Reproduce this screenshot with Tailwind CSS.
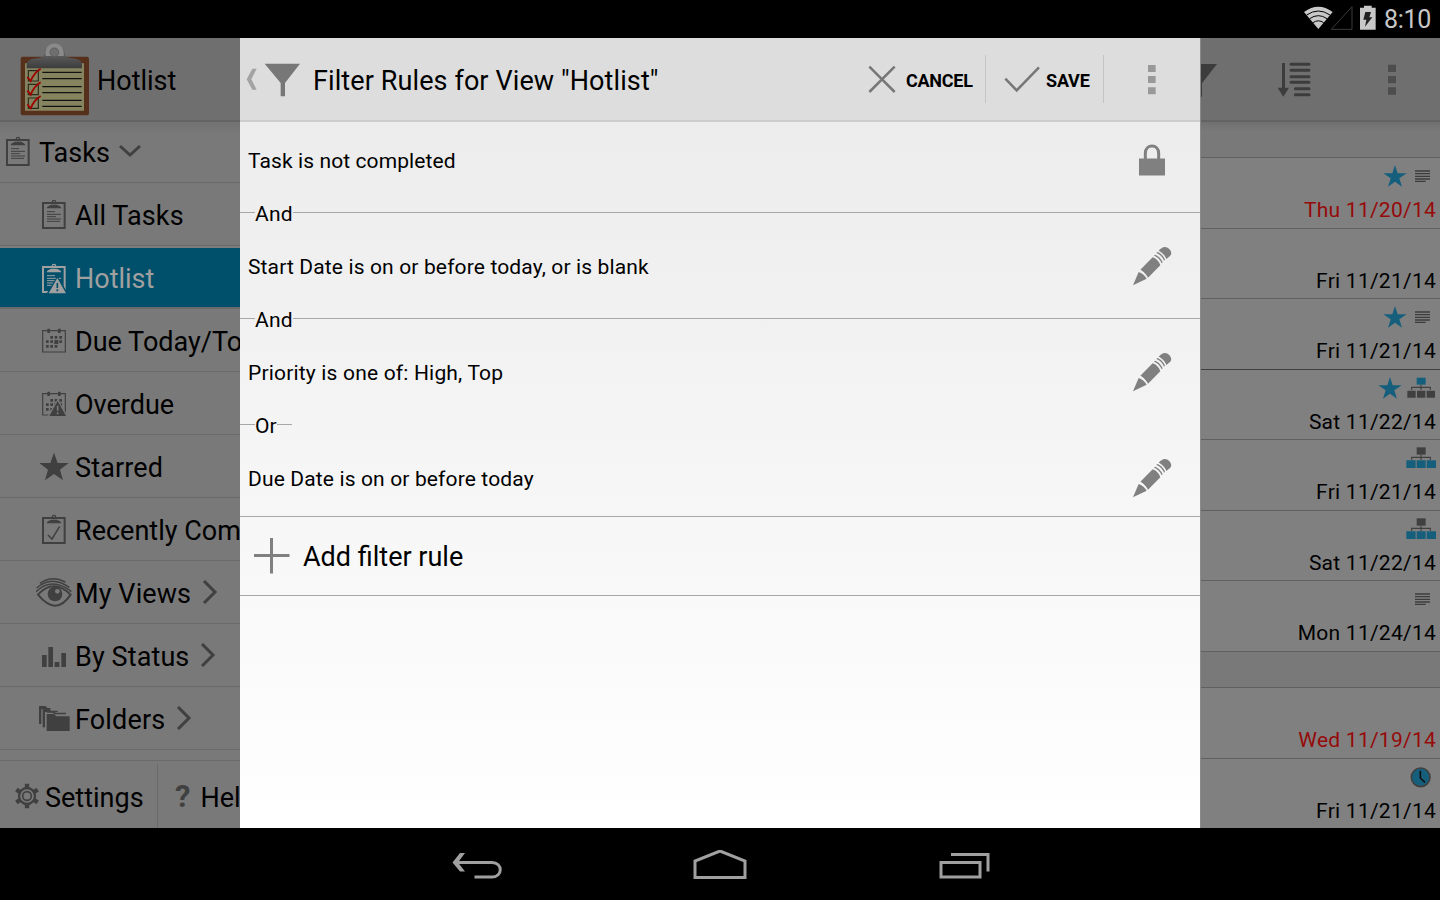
<!DOCTYPE html>
<html lang="en">

<head>
    <meta charset="UTF-8">
    <meta name="viewport" content="width=device-width, initial-scale=1.0">
    <title>Filter Rules</title>
    <script src="https://cdn.jsdelivr.net/npm/@tailwindcss/browser@4"></script>
</head>

<body class="w-[1440px] h-[900px] overflow-hidden bg-black font-['Roboto',sans-serif] text-black flex flex-col">

    <!-- Shared icons -->
    <svg class="hidden">
        <symbol id="clipboard" viewBox="0 0 108 108">
            <rect x="21" y="21" width="65" height="75" fill="none" stroke="currentColor" stroke-width="6" />
            <path d="M32 37c1-7 8-8 13-11h18c5 3 12 4 13 11z" fill="currentColor" />
            <circle cx="54" cy="18" r="5" fill="none" stroke="currentColor" stroke-width="4" />
        </symbol>
        <symbol id="note-lines" viewBox="0 0 108 108">
            <path d="M33 47h24M33 55h42M33 62h27M33 69h42M33 76h39" stroke="currentColor" stroke-width="3" />
        </symbol>
        <symbol id="calendar" viewBox="0 0 108 108">
            <path d="M20 26h68v64H20z" fill="none" stroke="currentColor" stroke-width="3.5" />
            <path d="M34 20h8v13h-8zM66 20h8v13h-8z" fill="currentColor" />
            <path d="M43 42h8v8h-8zM56 42h8v8h-8zM70 42h8v8h-8zM30 55h8v8h-8zM43 55h8v8h-8zM55 54h12v12H55zM70 55h8v8h-8zM30 69h8v8h-8zM43 69h8v8h-8zM56 69h8v8h-8z" fill="currentColor" />
        </symbol>
        <symbol id="star" viewBox="0 0 72 72">
            <path d="M36 3l8 25h27L49 43l8 25-21-15-21 15 8-25L1 28h27z" fill="currentColor" />
        </symbol>
        <symbol id="lines" viewBox="0 0 75 72">
            <path d="M12 21h45M12 29h45M12 37h45M12 45h45M12 52h32" stroke="#3c3c3c" stroke-width="4" />
        </symbol>
        <symbol id="tree-parent" viewBox="0 0 90 72">
            <path d="M45 26v16M17 42V34h56v8" fill="none" stroke="#404040" stroke-width="3.5" />
            <path d="M32 5h27v21H32z" fill="#165f7c" />
            <path d="M4 44h25v21H4zM33 44h25v21H33zM62 44h25v21H62z" fill="#404040" />
        </symbol>
        <symbol id="tree-child" viewBox="0 0 90 72">
            <path d="M45 26v16M17 42V34h56v8" fill="none" stroke="#404040" stroke-width="3.5" />
            <path d="M32 4h27v22H32z" fill="#404040" />
            <path d="M1 43h28v23H1zM32 43h27v23H32zM62 43h28v23H62z" fill="#165f7c" />
        </symbol>
        <symbol id="pencil" viewBox="84 36 144 144">
            <path d="M99 166l17-40c9 2 19 11 24 20z" fill="#808080" />
            <path d="M121 119l37-37c9 2 20 13 23 24l-37 37c-4-9-14-20-23-24z" fill="#808080" />
            <path d="M162 77l3-3c10 3 20 14 23 23l-3 3c-3-9-13-20-23-23zM169 69l3-3c10 3 20 14 23 23l-3 3c-3-9-13-20-23-23z" fill="#808080" />
            <path d="M176 62c7-8 16-15 27-9 11 7 14 19 7 25l-11 9c-3-10-13-21-23-25z" fill="#808080" />
        </symbol>
    </svg>

    <!-- Status bar -->
    <div class="h-[38px] flex justify-end items-start text-[#c8c8c8]">
        <svg class="w-20 h-[30px] mt-[3px]" viewBox="330 10 240 90">
            <path d="M385 88L342 37q43-31 86 0z" fill="#c8c8c8" />
            <path d="M350 46q35-24 70 0M359 57q26-18 52 0M369 69q16-11 32 0" fill="none" stroke="#000" stroke-width="3" />
            <path d="M424 89l62-68v68z" fill="none" stroke="#3a3a3a" stroke-width="3" />
            <path d="M510 24h12v-6h23v6h12v66h-47z" fill="#c8c8c8" />
            <path d="M526 37h17l-5 16h9l-22 28 4-21h-9z" fill="#222" />
        </svg>
        <span class="text-[25px] leading-[39px] w-[56px] ml-1 -tracking-[0.3px]">8:10</span>
    </div>

    <div class="h-[790px] flex">

        <!-- Sidebar -->
        <aside class="w-60 shrink-0 overflow-hidden bg-[#797979] flex flex-col whitespace-nowrap text-[27px]">
            <div class="h-[84px] shrink-0 bg-[#6f6f6f] border-b-2 border-[#636363] flex items-center pl-5">
                <svg class="w-[70px] h-[74px] shrink-0" viewBox="60 18 210 222">
                    <defs>
                        <linearGradient id="clip" x2="0" y2="1">
                            <stop offset="0" stop-color="#777" />
                            <stop offset="1" stop-color="#3c3c3c" />
                        </linearGradient>
                    </defs>
                    <rect x="62" y="62" width="205" height="176" rx="6" fill="#57301c" />
                    <path d="M75 82h177v142H75z" fill="#85845f" />
                    <path d="M80 97V84c2-12 16-16 30-17 20-2 24-8 24-19 0-34 60-34 60 0 0 11 4 17 24 19 14 1 26 5 28 17v13z" fill="url(#clip)" />
                    <path d="M137 60c-8-50 60-50 54 0z" fill="#8a8a8a" />
                    <circle cx="163" cy="49" r="13" fill="#6f6f6f" stroke="#5c5c5c" stroke-width="3" />
                    <path d="M127 109h118M127 128h118M127 152h118M127 170h118M127 193h118M127 211h118" stroke="#111" stroke-width="3.5" />
                    <path d="M85 104h30v31H85zM85 145h30v31H85zM85 186h30v31H85z" fill="none" stroke="#2a2a20" stroke-width="3.5" />
                    <path d="M82 123l10 12q10-25 30-37M82 164l10 12q10-25 30-37M82 205l10 12q10-25 30-37" fill="none" stroke="#a00000" stroke-width="5.5" />
                </svg>
                <span class="pl-[7px] pt-[4px]">Hotlist</span>
            </div>
            <div class="h-[61px] shrink-0 border-b border-[#6a6a6a] flex items-center text-[#404040] bg-linear-to-b from-[#727272] to-[#797979] to-20%">
                <svg class="w-9 h-9 mb-0.5 shrink-0"><use href="#clipboard" /><use href="#note-lines" /></svg>
                <span class="text-black pl-[3px] pt-[3px]">Tasks</span>
                <svg class="w-6 h-6 ml-[8px] mb-1" viewBox="0 0 24 24" fill="none" stroke="currentColor" stroke-width="3"><path d="M2 8l10 9 10-9" /></svg>
            </div>
            <div class="h-[63px] shrink-0 border-b border-[#6a6a6a] flex items-center pl-9 text-[#404040]">
                <svg class="w-9 h-9 shrink-0"><use href="#clipboard" /><use href="#note-lines" /></svg>
                <span class="text-black pl-[3px] pt-[4px] tracking-[0.1px]">All Tasks</span>
            </div>
            <div class="h-[63px] shrink-0 border-y-2 border-t-[#7d7d7d] border-b-[#6a6a6a] bg-[#004f6b] flex items-center pl-9 text-[#a0a0a0]">
                <svg class="w-9 h-9 shrink-0" viewBox="0 0 108 108">
                    <use href="#clipboard" width="108" height="108" /><use href="#note-lines" width="108" height="108" />
                    <path d="M64 48l33 54H31z" fill="#004f6b" />
                    <path d="M64 54l26 46H38z" fill="currentColor" />
                    <path d="M64 69v15M64 88v6" stroke="#004f6b" stroke-width="5" />
                </svg>
                <span class="pl-[3px] pt-[4px]">Hotlist</span>
            </div>
            <div class="h-[63px] shrink-0 border-b border-[#6a6a6a] flex items-center pl-9 text-[#404040]">
                <svg class="w-9 h-9 shrink-0"><use href="#calendar" /></svg>
                <span class="text-black pl-[3px] pt-[4px]">Due Today/Tomorrow</span>
            </div>
            <div class="h-[63px] shrink-0 border-b border-[#6a6a6a] flex items-center pl-9 text-[#404040]">
                <svg class="w-9 h-9 shrink-0" viewBox="0 0 108 108">
                    <use href="#calendar" width="108" height="108" />
                    <path d="M65 42l32 54H33z" fill="#797979" />
                    <path d="M65 48l25 45H40z" fill="currentColor" />
                    <path d="M65 62v15M65 82v6" stroke="#797979" stroke-width="5" />
                </svg>
                <span class="text-black pl-[3px] pt-[4px]">Overdue</span>
            </div>
            <div class="h-[63px] shrink-0 border-b border-[#6a6a6a] flex items-center pl-9 text-[#404040]">
                <svg class="w-9 h-9 shrink-0" viewBox="108 54 108 108"><path d="M162 68l11 31h33l-26 20 9 32-27-19-27 19 9-32-26-20h33z" fill="currentColor" /></svg>
                <span class="text-black pl-[3px] pt-[4px] tracking-[0.15px]">Starred</span>
            </div>
            <div class="h-[63px] shrink-0 border-b border-[#6a6a6a] flex items-center pl-9 text-[#404040]">
                <svg class="w-9 h-9 shrink-0" viewBox="0 0 108 108">
                    <use href="#clipboard" width="108" height="108" />
                    <path d="M36 72l12 12 23-38" fill="none" stroke="currentColor" stroke-width="4.5" />
                </svg>
                <span class="text-black pl-[3px] pt-[4px]">Recently Completed</span>
            </div>
            <div class="h-[63px] shrink-0 border-b border-[#6a6a6a] flex items-center pl-9 text-[#404040]">
                <svg class="w-9 h-9 shrink-0" viewBox="108 432 108 108" fill="none" stroke="currentColor">
                    <path d="M114 494q46-50 98 0q-44 66-98 0z" stroke-width="6" />
                    <path d="M108 485q48-46 106 0M110 474q44-40 98-2M120 460q34-26 76-4" stroke-width="4.5" />
                    <circle cx="165" cy="492" r="22" fill="currentColor" stroke="none" />
                    <circle cx="172" cy="484" r="7" fill="#797979" stroke="none" />
                </svg>
                <span class="text-black pl-[3px] pt-[4px] tracking-[0.1px]">My Views</span>
                <svg class="w-4 h-6 ml-[11px]" viewBox="0 0 16 24" fill="none" stroke="currentColor" stroke-width="3"><path d="M2 1l11 11L2 23" /></svg>
            </div>
            <div class="h-[63px] shrink-0 border-b border-[#6a6a6a] flex items-center pl-9 text-[#404040]">
                <svg class="w-9 h-9 shrink-0" viewBox="108 621 108 108"><path d="M126 675h14v36h-14zM145 651h14v60h-14zM164 696h14v15h-14zM184 669h14v42h-14z" fill="currentColor" /></svg>
                <span class="text-black pl-[3px] pt-[4px] tracking-[0.1px]">By Status</span>
                <svg class="w-4 h-6 ml-[11px]" viewBox="0 0 16 24" fill="none" stroke="currentColor" stroke-width="3"><path d="M2 1l11 11L2 23" /></svg>
            </div>
            <div class="h-[63px] shrink-0 border-b border-[#6a6a6a] flex items-center pl-9 text-[#404040]">
                <svg class="w-9 h-9 shrink-0" viewBox="108 120 108 108">
                    <path d="M117 138h20l5 6h10v4h-28v44h-7zM128 146h20l5 6h20v4h-38v46h-7z" fill="currentColor" />
                    <path d="M140 155h22l6 3h30v5h-34l-6-5h-18z" fill="currentColor" />
                    <path d="M140 162h22l7 7h40v44h-69z" fill="currentColor" />
                </svg>
                <span class="text-black pl-[3px] pt-[4px] tracking-[0.15px]">Folders</span>
                <svg class="w-4 h-6 ml-[11px]" viewBox="0 0 16 24" fill="none" stroke="currentColor" stroke-width="3"><path d="M2 1l11 11L2 23" /></svg>
            </div>
            <div class="mt-[10px] flex-1 border-t border-[#6a6a6a] flex items-end text-[#404040]">
                <div class="w-[158px] h-16 shrink-0 border-r border-[#6a6a6a] flex items-center pl-[15px]">
                    <svg class="w-6 h-[26px] shrink-0" viewBox="45 368 72 78" fill="none" stroke="currentColor">
                        <circle cx="81" cy="407" r="24" stroke-width="7" />
                        <circle cx="81" cy="407" r="13" stroke-width="5" />
                        <path d="M81 370v13M81 431v13M49 388l11 7M102 419l11 7M113 388l-11 7M60 419l-11 7" stroke-width="13" />
                    </svg>
                    <span class="text-black pl-[6px] pt-[4px]">Settings</span>
                </div>
                <div class="h-16 flex items-center pl-[17px]">
                    <span class="text-[31px] font-bold leading-none">?</span>
                    <span class="text-black pl-[10px] pt-[4px]">Help</span>
                </div>
            </div>
        </aside>

        <!-- Filter rules dialog -->
        <main class="w-[960px] shrink-0 flex flex-col bg-linear-to-b from-[#eaeaea] to-white">
            <header class="h-[84px] shrink-0 bg-[#ddd] border-b-2 border-[#cdcdcd] flex items-center">
                <svg class="w-[70px] h-[84px]" viewBox="0 22 210 252">
                    <path d="M37 117h13l-16 32 16 31H37L20 149z" fill="#a3a3a3" />
                    <path d="M74 102h106l-45 58v40h-13v-40z" fill="#777" />
                </svg>
                <h1 class="text-[27px] flex-1 pl-[3px] pt-[4px] tracking-[0.1px]">Filter Rules for View "Hotlist"</h1>
                <div class="h-12 w-[124px] flex items-center border-r border-[#c4c4c4] text-[18px] font-bold">
                    <svg class="w-10 h-12" viewBox="36 58 120 144"><path d="M58 93l76 76M134 93l-76 76" stroke="#777" stroke-width="7.5" /></svg>
                    <span class="pl-1 pt-[2px] -tracking-[0.25px]">CANCEL</span>
                </div>
                <div class="h-12 w-[118px] flex items-center pl-[14px] border-r border-[#c4c4c4] text-[18px] font-bold">
                    <svg class="w-[42px] h-12" viewBox="450 58 126 144"><path d="M466 129l34 35 67-69" fill="none" stroke="#777" stroke-width="7.5" /></svg>
                    <span class="pl-1 pt-[2px] -tracking-[0.2px]">SAVE</span>
                </div>
                <svg class="w-24 h-[84px]" viewBox="762 3 288 252"><path d="M894 87h23v21h-23zM894 120h23v21h-23zM894 154h23v21h-23z" fill="#999" /></svg>
            </header>

            <div class="h-[79px] shrink-0 flex items-center justify-between px-2 pr-6 text-[21px] tracking-[0.1px]">
                <span class="pt-[1px]">Task is not completed</span>
                <svg class="size-12" viewBox="834 307.5 144 144">
                    <path d="M867 369h78v51h-78z" fill="#808080" />
                    <path d="M886 372v-19c0-29 40-29 40 0v19" fill="none" stroke="#808080" stroke-width="9" />
                </svg>
            </div>
            <div class="h-[23px] shrink-0 flex items-center text-[21px] leading-[21px] tracking-[0.2px]">
                <div class="w-[15px] h-px bg-[#a8a8a8]"></div>
                <span class="pt-[4px]">And</span>
                <div class="flex-1 h-px bg-[#a8a8a8]"></div>
            </div>
            <div class="h-[83px] shrink-0 flex items-center justify-between px-2 pr-6 text-[21px] tracking-[0.14px]">
                <span class="pt-[5px]">Start Date is on or before today, or is blank</span>
                <svg class="size-12"><use href="#pencil" /></svg>
            </div>
            <div class="h-[23px] shrink-0 flex items-center text-[21px] leading-[21px] tracking-[0.2px]">
                <div class="w-[15px] h-px bg-[#a8a8a8]"></div>
                <span class="pt-[4px]">And</span>
                <div class="flex-1 h-px bg-[#a8a8a8]"></div>
            </div>
            <div class="h-[83px] shrink-0 flex items-center justify-between px-2 pr-6 text-[21px] tracking-[0.18px]">
                <span class="pt-[5px]">Priority is one of: High, Top</span>
                <svg class="size-12"><use href="#pencil" /></svg>
            </div>
            <div class="h-[23px] shrink-0 flex items-center text-[21px] leading-[21px]">
                <div class="w-[15px] h-px bg-[#a8a8a8]"></div>
                <span class="pt-[4px]">Or</span>
                <div class="w-[15px] h-px bg-[#a8a8a8]"></div>
            </div>
            <div class="h-[81px] shrink-0 border-b border-[#a8a8a8] flex items-center justify-between pt-[3px] pl-2 pr-6 text-[21px] tracking-[0.14px]">
                <span class="pt-[5px]">Due Date is on or before today</span>
                <svg class="size-12"><use href="#pencil" /></svg>
            </div>
            <div class="h-[79px] shrink-0 border-b border-[#a8a8a8] flex items-center pl-[13px] text-[27px]">
                <svg class="size-[38px]" viewBox="0 0 38 38"><path d="M1 18.5h35.5M18.5 1v35.5" stroke="#808080" stroke-width="3" /></svg>
                <span class="pl-[12px] pt-[3px]">Add filter rule</span>
            </div>
        </main>

        <!-- Task list -->
        <section class="w-60 shrink-0 overflow-hidden bg-[#808080] border-l border-[#8a8a8a] text-[21px] tracking-[0.25px]">
            <div class="h-[84px] bg-[#6f6f6f] border-b-2 border-[#636363] flex">
                <svg class="w-12 h-[84px] -ml-px" viewBox="30 114 144 252"><path d="M30 192h51l-45 58v40h-6z" fill="#3c3c3c" /></svg>
                <svg class="w-24 h-[84px]" viewBox="174 114 288 252">
                    <path d="M276 189h9v74h12l-17 27-17-27h13z" fill="#3c3c3c" />
                    <path d="M303 193h54M303 211h54M303 230h54M303 247h54M316 266h41M316 284h41" stroke="#3c3c3c" stroke-width="9" stroke-linecap="round" />
                </svg>
                <svg class="w-24 h-[84px]" viewBox="462 114 288 252"><path d="M594 194h24v22h-24zM594 228h24v22h-24zM594 262h24v22h-24z" fill="#4d4d4d" /></svg>
            </div>
            <div class="h-9 border-b border-[#606060] bg-linear-to-b from-[#707070] to-[#797979] to-25%"></div>
            <div class="h-[70.5px] border-b border-[#606060] pt-[6px] pr-1 flex flex-col items-end">
                <div class="h-6 flex gap-1 text-[#165f7c]"><svg class="size-6"><use href="#star" /></svg><svg class="w-[25px] h-6"><use href="#lines" /></svg></div>
                <span class="leading-[30px] pt-[7px] text-[#960a0a]">Thu 11/20/14</span>
            </div>
            <div class="h-[70.5px] border-b border-[#606060] pt-[6px] pr-1 flex flex-col items-end">
                <div class="h-6"></div>
                <span class="leading-[30px] pt-[7px]">Fri 11/21/14</span>
            </div>
            <div class="h-[70.5px] border-b border-[#404040] pt-[6px] pr-1 flex flex-col items-end">
                <div class="h-6 flex gap-1 text-[#165f7c]"><svg class="size-6"><use href="#star" /></svg><svg class="w-[25px] h-6"><use href="#lines" /></svg></div>
                <span class="leading-[30px] pt-[7px]">Fri 11/21/14</span>
            </div>
            <div class="h-[70.5px] border-b border-[#606060] pt-[6px] pr-1 flex flex-col items-end">
                <div class="h-6 flex gap-1 text-[#165f7c]"><svg class="size-6"><use href="#star" /></svg><svg class="w-[30px] h-6"><use href="#tree-parent" /></svg></div>
                <span class="leading-[30px] pt-[7px]">Sat 11/22/14</span>
            </div>
            <div class="h-[70.5px] border-b border-[#606060] pt-[6px] pr-1 flex flex-col items-end">
                <svg class="w-[30px] h-6"><use href="#tree-child" /></svg>
                <span class="leading-[30px] pt-[7px]">Fri 11/21/14</span>
            </div>
            <div class="h-[70.5px] border-b border-[#606060] pt-[6px] pr-1 flex flex-col items-end">
                <svg class="w-[30px] h-6"><use href="#tree-child" /></svg>
                <span class="leading-[30px] pt-[7px]">Sat 11/22/14</span>
            </div>
            <div class="h-[70.5px] border-b border-[#606060] pt-[6px] pr-1 flex flex-col items-end">
                <svg class="w-[25px] h-6"><use href="#lines" /></svg>
                <span class="leading-[30px] pt-[7px]">Mon 11/24/14</span>
            </div>
            <div class="h-[36.5px] border-b border-[#606060] bg-[#797979]"></div>
            <div class="h-[70.5px] border-b border-[#606060] pt-[6px] pr-1 flex flex-col items-end">
                <div class="h-6"></div>
                <span class="leading-[30px] pt-[7px] text-[#960a0a]">Wed 11/19/14</span>
            </div>
            <div class="h-[70px] pt-[6px] pr-1 flex flex-col items-end">
                <svg class="w-[30px] h-6" viewBox="0 0 90 72">
                    <circle cx="44" cy="37" r="28" fill="#165f7c" stroke="#404040" stroke-width="5" />
                    <path d="M43 17v22l14 13" fill="none" stroke="#111" stroke-width="5" />
                </svg>
                <span class="leading-[30px] pt-[7px]">Fri 11/21/14</span>
            </div>
        </section>
    </div>

    <!-- Navigation bar -->
    <nav class="h-[72px] flex justify-center items-start pt-[22px]">
        <svg class="w-[580px] h-8" viewBox="0 0 580 32" fill="none" stroke="#a0a0a0" stroke-width="3">
            <path d="M25 12.5h37c11 0 11 14.5 0 14.5H44.500" />
            <path d="M30 3h5l-7 9.500 7 9h-5l-7.500-9z" fill="#a0a0a0" stroke="none" />
            <path d="M265 27V10.500l25-10 25 10V27z" transform="translate(0 .5)" />
            <path d="M511 12.500h39V27h-39zM521 4.500h37V21.500" />
        </svg>
    </nav>

</body>

</html>
